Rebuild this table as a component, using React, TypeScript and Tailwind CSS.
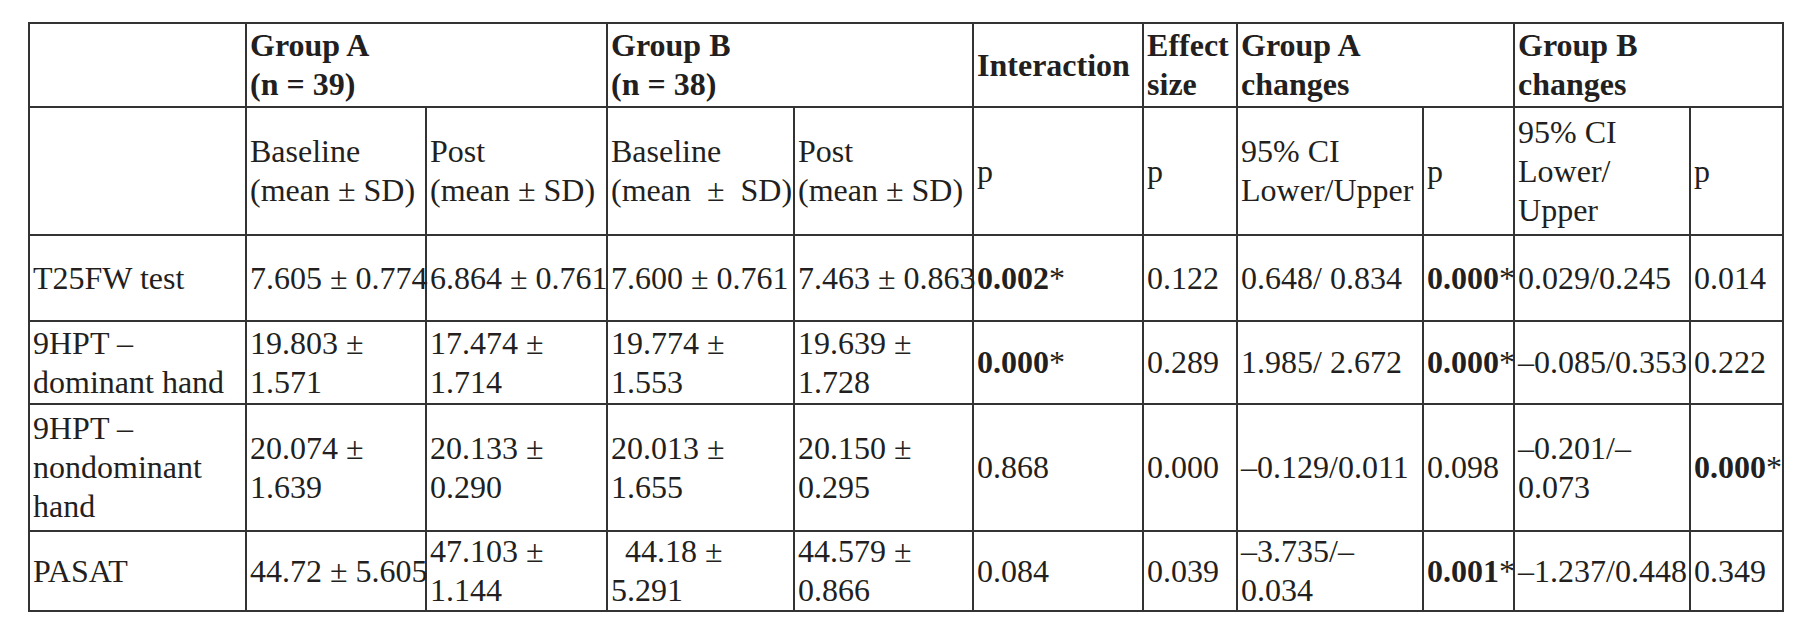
import React from "react";

type CellValue = React.ReactNode;

// bold p-value with a plain asterisk, as in the printed table
function Sig({ v }: { v: string }) {
  return (
    <>
      <span className="font-bold">{v}</span>*
    </>
  );
}

function Lines({ lines }: { lines: CellValue[] }) {
  return (
    <>
      {lines.map((line, i) => (
        <React.Fragment key={i}>
          {i > 0 && <br />}
          {line}
        </React.Fragment>
      ))}
    </>
  );
}

const cellClass =
  "border-2 border-[#333] px-[3px] py-0 align-middle whitespace-nowrap text-left";

const bodyRows: { height: string; cells: CellValue[][] }[] = [
  {
    height: "h-[86px]",
    cells: [
      ["T25FW test"],
      ["7.605 ± 0.774"],
      ["6.864 ± 0.761"],
      ["7.600 ± 0.761"],
      ["7.463 ± 0.863"],
      [<Sig v="0.002" />],
      ["0.122"],
      ["0.648/ 0.834"],
      [<Sig v="0.000" />],
      ["0.029/0.245"],
      ["0.014"],
    ],
  },
  {
    height: "h-[83px]",
    cells: [
      ["9HPT –", "dominant hand"],
      ["19.803 ±", "1.571"],
      ["17.474 ±", "1.714"],
      ["19.774 ±", "1.553"],
      ["19.639 ±", "1.728"],
      [<Sig v="0.000" />],
      ["0.289"],
      ["1.985/ 2.672"],
      [<Sig v="0.000" />],
      ["–0.085/0.353"],
      ["0.222"],
    ],
  },
  {
    height: "h-[127px]",
    cells: [
      ["9HPT –", "nondominant", "hand"],
      ["20.074 ±", "1.639"],
      ["20.133 ±", "0.290"],
      ["20.013 ±", "1.655"],
      ["20.150 ±", "0.295"],
      ["0.868"],
      ["0.000"],
      ["–0.129/0.011"],
      ["0.098"],
      ["–0.201/–", "0.073"],
      [<Sig v="0.000" />],
    ],
  },
  {
    height: "h-[78px]",
    cells: [
      ["PASAT"],
      ["44.72 ± 5.605"],
      ["47.103 ±", "1.144"],
      [<span className="pl-[14px]">44.18 ±</span>, "5.291"],
      ["44.579 ±", "0.866"],
      ["0.084"],
      ["0.039"],
      ["–3.735/–", "0.034"],
      [<Sig v="0.001" />],
      ["–1.237/0.448"],
      ["0.349"],
    ],
  },
];

export default function App() {
  return (
    <div className="w-[1811px] h-[636px] bg-white pt-[22px] pl-[28px] font-['Liberation_Serif',serif] text-[32px] leading-[39px] text-[#231f20]">
      <table className="table-fixed border-collapse w-[1754px]">
        <colgroup>
          <col className="w-[217px]" />
          <col className="w-[180px]" />
          <col className="w-[181px]" />
          <col className="w-[187px]" />
          <col className="w-[179px]" />
          <col className="w-[170px]" />
          <col className="w-[94px]" />
          <col className="w-[186px]" />
          <col className="w-[91px]" />
          <col className="w-[176px]" />
          <col className="w-[93px]" />
        </colgroup>
        <thead>
          <tr className="h-[84px] font-bold">
            <th className={cellClass}></th>
            <th colSpan={2} className={cellClass}>
              Group A
              <br />
              (n = 39)
            </th>
            <th colSpan={2} className={cellClass}>
              Group B
              <br />
              (n = 38)
            </th>
            <th className={cellClass}>Interaction</th>
            <th className={cellClass}>
              Effect
              <br />
              size
            </th>
            <th colSpan={2} className={cellClass}>
              Group A
              <br />
              changes
            </th>
            <th colSpan={2} className={cellClass}>
              Group B
              <br />
              changes
            </th>
          </tr>
          <tr className="h-[128px] font-normal">
            <td className={cellClass}></td>
            <td className={cellClass}>
              Baseline
              <br />
              (mean ± SD)
            </td>
            <td className={cellClass}>
              Post
              <br />
              (mean ± SD)
            </td>
            <td className={cellClass}>
              Baseline
              <br />
              (mean&nbsp;&nbsp;±&nbsp;&nbsp;SD)
            </td>
            <td className={cellClass}>
              Post
              <br />
              (mean ± SD)
            </td>
            <td className={cellClass}>p</td>
            <td className={cellClass}>p</td>
            <td className={cellClass}>
              95% CI
              <br />
              Lower/Upper
            </td>
            <td className={cellClass}>p</td>
            <td className={cellClass}>
              95% CI
              <br />
              Lower/
              <br />
              Upper
            </td>
            <td className={cellClass}>p</td>
          </tr>
        </thead>
        <tbody>
          {bodyRows.map((row, r) => (
            <tr key={r} className={row.height}>
              {row.cells.map((lines, c) => (
                <td key={c} className={cellClass}>
                  <Lines lines={lines} />
                </td>
              ))}
            </tr>
          ))}
        </tbody>
      </table>
    </div>
  );
}
